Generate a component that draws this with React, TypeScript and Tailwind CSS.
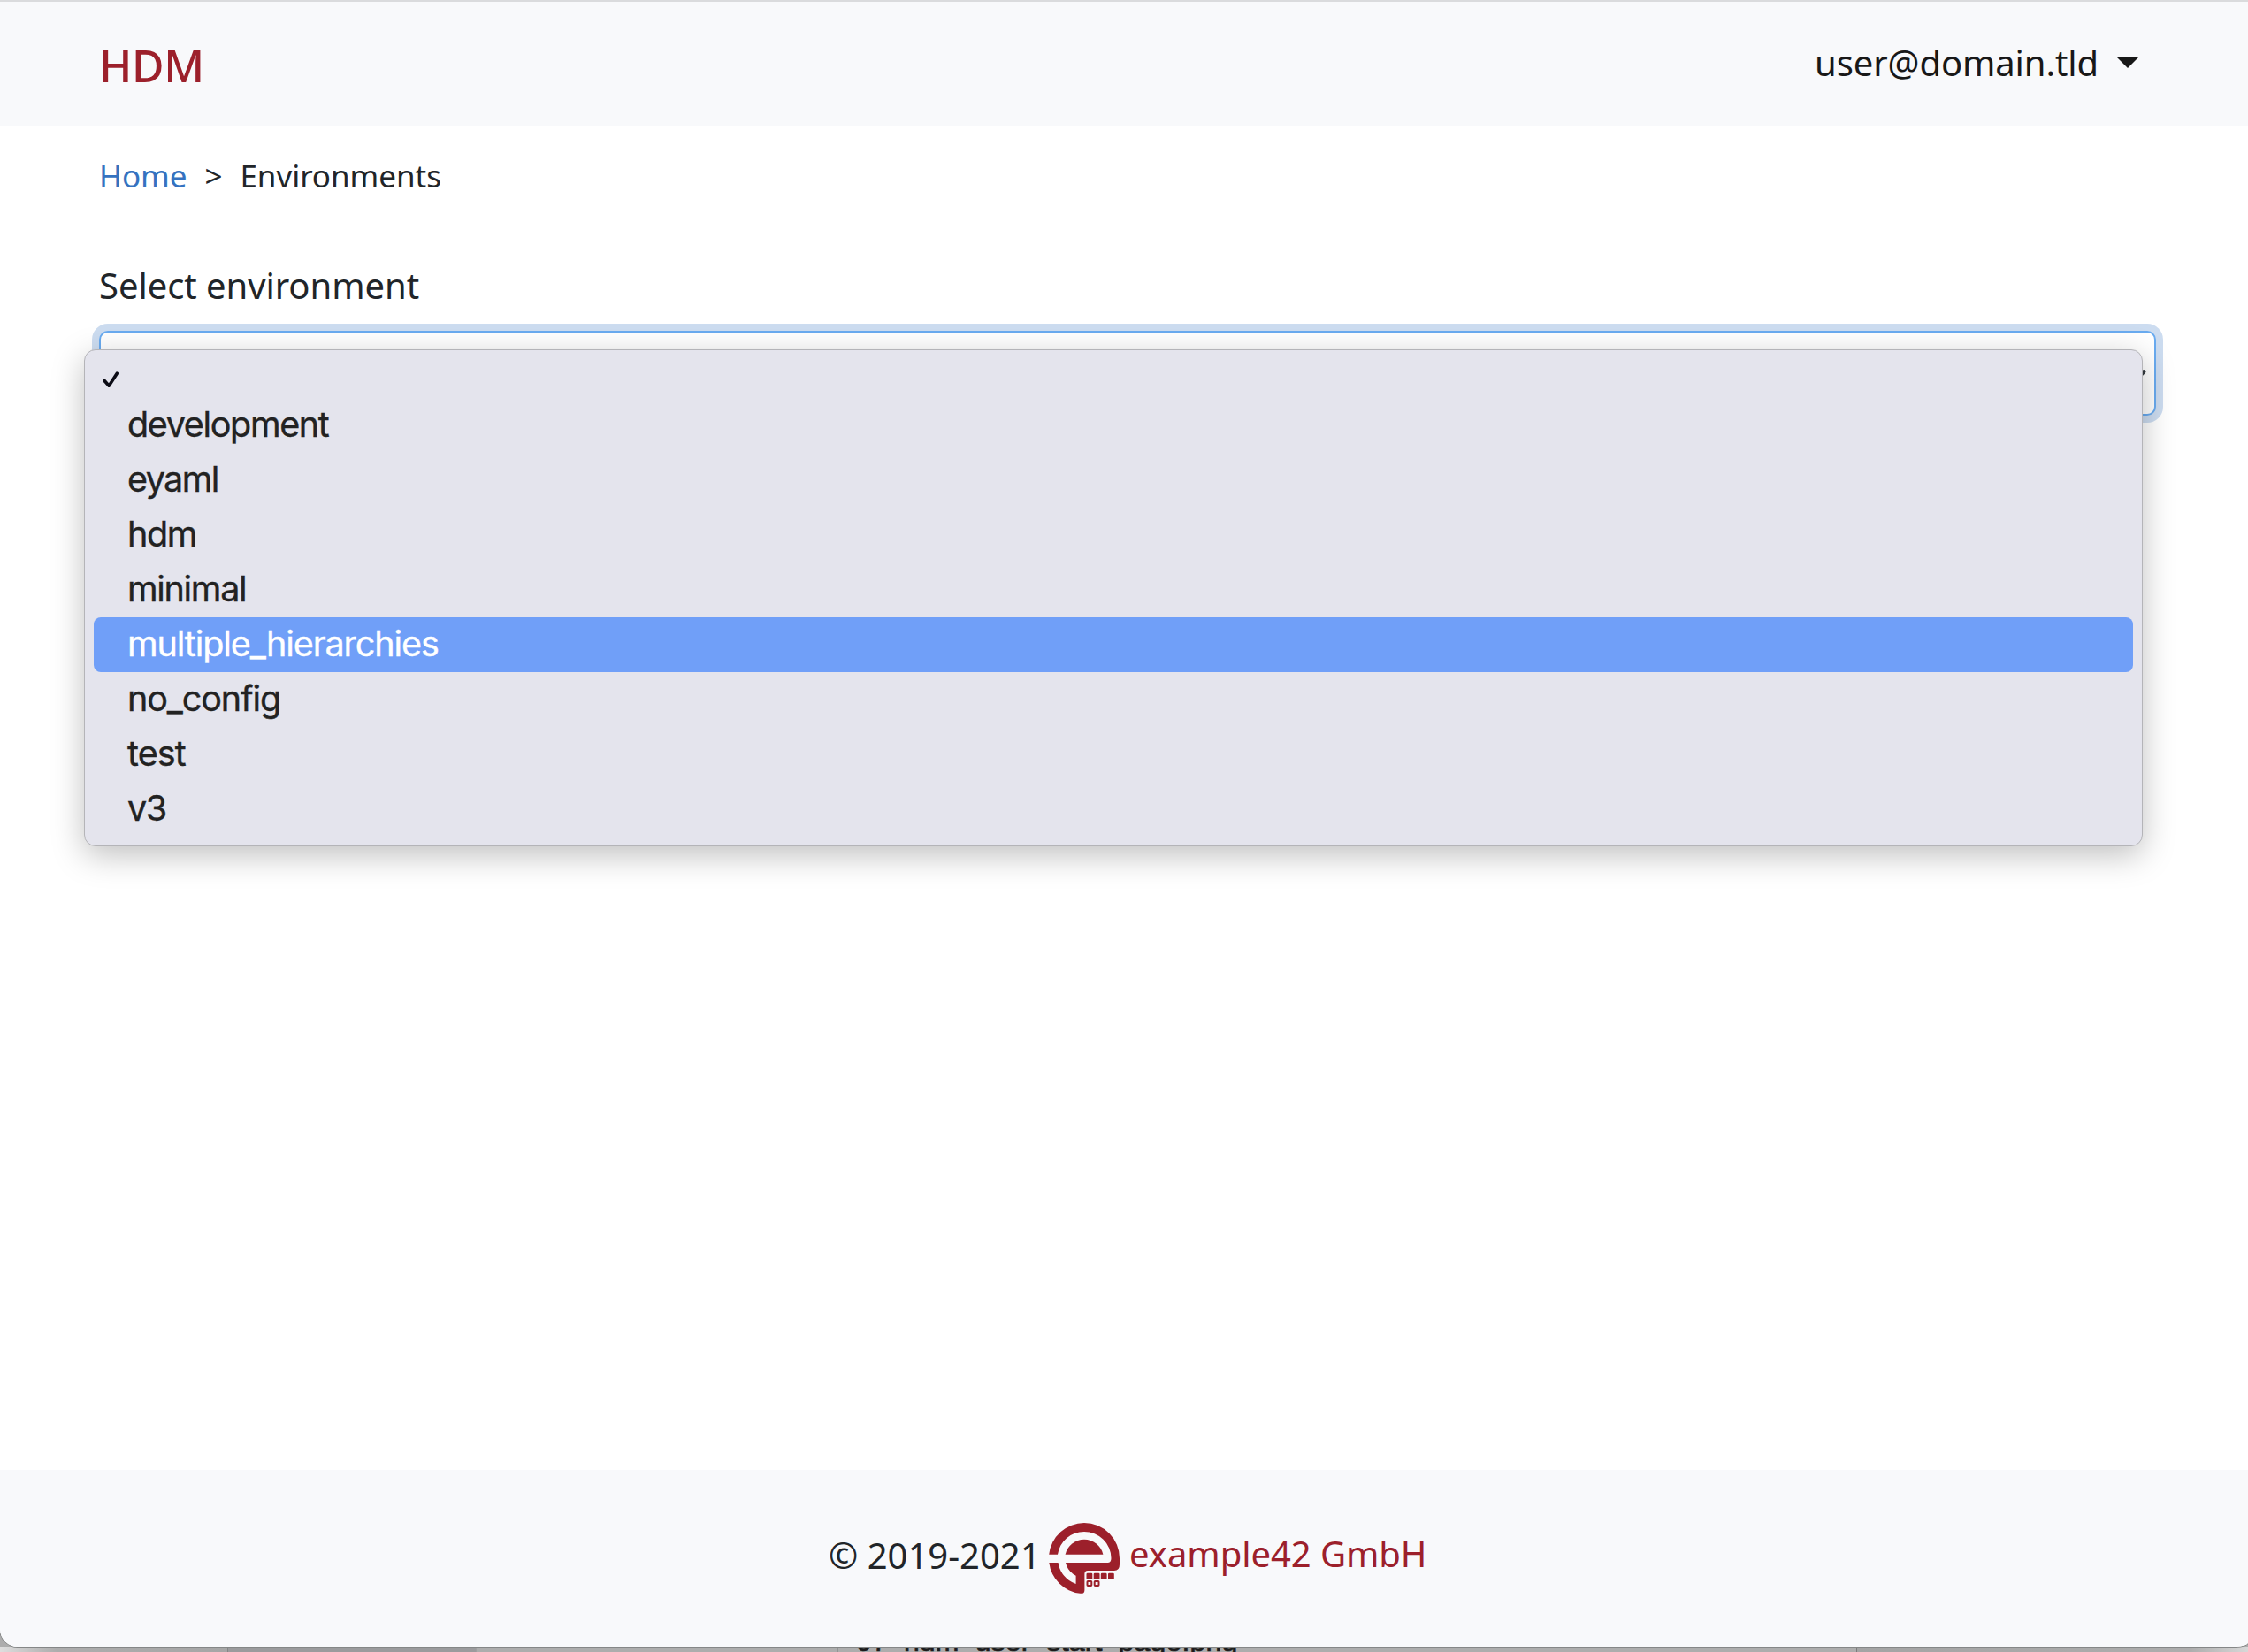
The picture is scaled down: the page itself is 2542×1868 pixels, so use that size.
type Option = { label: string; tracking: string };

const options: Option[] = [
  { label: "development", tracking: "tracking-[-1.35px]" },
  { label: "eyaml", tracking: "tracking-[-1.6px]" },
  { label: "hdm", tracking: "tracking-[-1.4px]" },
  { label: "minimal", tracking: "tracking-[-1.3px]" },
  { label: "multiple_hierarchies", tracking: "tracking-[-1.08px]" },
  { label: "no_config", tracking: "tracking-[-1.1px]" },
  { label: "test", tracking: "tracking-[-0.9px]" },
  { label: "v3", tracking: "tracking-[-1.4px]" },
];

const selected = "multiple_hierarchies";

function Logo() {
  return (
    <svg className="h-[80px] w-[80px]" viewBox="0 0 80 80" fill="#9c202b">
      <path d="M0.2 35.7A40 40 0 0 1 40 0A40 40 0 0 1 80 40V47Q80 54 74 54H44Q40.4 54 40.4 58V76Q40.4 80.4 35.5 79.8A40 40 0 0 1 0.3 45H10.6A30 30 0 0 0 30.6 69V59.7A22 22 0 0 1 19 45H66.5Q70.5 45 70.5 40A30.5 30 0 0 0 40 10A30.2 30 0 0 0 10 35.7Z" />
      <path d="M18.6 35.7A22 22 0 0 1 61.4 35.7Z" />
      <rect x="42.5" y="56.8" width="6.8" height="7.3" rx="1.3" />
      <rect x="50.7" y="56.8" width="6.8" height="7.3" rx="1.3" />
      <rect x="58.8" y="56.8" width="6.8" height="7.3" rx="1.3" />
      <rect x="67" y="56.8" width="6.8" height="7.3" rx="1.3" />
      <g fill="none" stroke="#9c202b" strokeWidth="2">
        <rect x="43.5" y="66.1" width="4.8" height="4.8" rx="0.7" />
        <rect x="51.7" y="66.1" width="4.8" height="4.8" rx="0.7" />
      </g>
    </svg>
  );
}

function Menu() {
  return (
    <div className="absolute -left-[19px] top-[19px] w-[2328px] rounded-[13px] border border-[#b4b4b8] bg-[#e4e4ed] px-[10px] py-[10px] font-['Inter',sans-serif] text-[39.5px] text-[#222222] shadow-[0_10px_36px_rgba(0,0,0,0.25)]">
      <div className="flex h-[44px] items-center pl-[8px]">
        <svg className="mt-[2px] h-[22px] w-[22px]" viewBox="0 0 22 22" fill="none" stroke="#0c0c16" strokeWidth="3.6" strokeLinecap="round" strokeLinejoin="round">
          <path d="M3.9 12.2L9.2 18.2L18.3 4.2" />
        </svg>
      </div>
      {options.map((o) => (
        <div
          key={o.label}
          className={`h-[62px] rounded-[8px] pl-[38px] leading-[60px] [-webkit-text-stroke:0.4px_currentColor] ${o.tracking} ${o.label === selected ? "bg-[#709ff8] text-white" : ""}`}
        >
          {o.label}
        </div>
      ))}
    </div>
  );
}

export default function App() {
  return (
    <div className="h-[1868px] w-[2542px] overflow-hidden bg-[#adadad] font-['Noto_Sans',sans-serif] text-[40px] text-[#212529]">
      <div className="relative z-10 flex h-[1862px] flex-col overflow-hidden rounded-bl-[20px] rounded-br-[14px_5px] bg-white shadow-[0_0_0_1px_#858787]">
        <header className="flex h-[142px] items-center justify-between border-t-2 border-[#dadbdd] bg-[#f8f9fb] pl-[112px] pr-[124px]">
          <a className="pt-[4px] text-[50px] font-medium leading-[75px] tracking-[-0.4px] text-[#9c202b]">HDM</a>
          <div className="flex items-center pb-[3px] leading-[60px] text-[#181818]">
            <span className="tracking-[-0.12px]">user@domain.tld</span>
            <svg className="ml-[21px] h-[12px] w-[24px]" viewBox="0 0 24 12" fill="#181818">
              <path d="M0 0H24L12 12Z" />
            </svg>
          </div>
        </header>

        <main className="flex-1 px-[112px] pt-[31px]">
          <nav className="flex gap-[20px] text-[35px] leading-[52px] tracking-[-0.04px]">
            <a className="text-[#3572c0]">Home</a>
            <span>&gt;</span>
            <span>Environments</span>
          </nav>
          <label className="mt-[68px] block leading-[60px] tracking-[-0.06px]">Select environment</label>
          <div className="relative mt-[21px] flex h-[96px] w-[2326px] items-center justify-end rounded-[10px] border-2 border-[#69abf0] bg-white pr-[8px] shadow-[0_0_0_8px_#ccdcf0]">
            <svg className="mt-[7px] h-[30px] w-[30px]" viewBox="0 0 16 16" fill="none" stroke="#343a40" strokeWidth="2.4" strokeLinecap="round" strokeLinejoin="round">
              <path d="M2 5l6 6 6-6" />
            </svg>
            <Menu />
          </div>
        </main>

        <footer className="flex h-[200px] items-center bg-[#f8f9fb] pl-[937px] leading-[60px]">
          <span className="pb-[7px]">© 2019-2021</span>
          <span className="ml-[9px]">
            <Logo />
          </span>
          <span className="ml-[11.5px] pb-[10px] tracking-[-0.06px] text-[#9c202b]">example42 GmbH</span>
        </footer>
      </div>

      <div className="flex h-[6px] overflow-hidden text-[32px] text-[#1c1c1c]">
        <div className="w-[257px] bg-linear-to-r from-[#dedede] via-[#adadad] via-25% to-[#a6a6a6]" />
        <div className="w-[281px] border-l border-[#868686] bg-[#9b9b9d]" />
        <div className="w-[409px] border-l border-[#a0a0a0] bg-[#adadad]" />
        <div className="w-[1152px] border-l border-[#949494] bg-[#adadad] pl-[20px]">
          <div className="-mt-[30px] font-['Liberation_Sans',sans-serif] leading-[48px] tracking-[0.17px] [-webkit-text-stroke:0.7px_currentColor]">07_hdm_user_start_page.png</div>
        </div>
        <div className="flex-1 border-l border-[#7c7c7c] bg-linear-to-r from-[#a4a4a4] via-[#adadad] via-85% to-[#d8d8d8]" />
      </div>
    </div>
  );
}
